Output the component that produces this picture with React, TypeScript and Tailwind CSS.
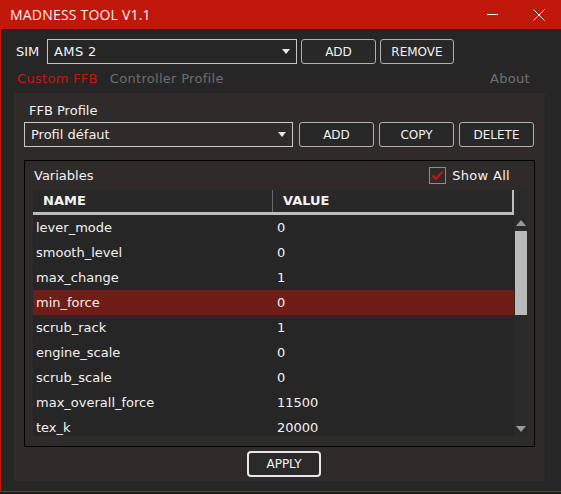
import React from 'react'

const rows = [
  ['lever_mode', '0'],
  ['smooth_level', '0'],
  ['max_change', '1'],
  ['min_force', '0'],
  ['scrub_rack', '1'],
  ['engine_scale', '0'],
  ['scrub_scale', '0'],
  ['max_overall_force', '11500'],
  ['tex_k', '20000'],
]

const font = { fontFamily: '"DejaVu Sans", sans-serif' }

function Arrow() {
  return (
    <svg width="8" height="5" viewBox="0 0 8 5" className="shrink-0">
      <path d="M0 0 H8 L4 5 Z" fill="#e8e8e8" />
    </svg>
  )
}

function Btn({ label, w }: { label: string; w: string }) {
  return (
    <button
      className={`${w} h-[25px] rounded-[3px] border border-[#b0b0b0] bg-[#282828] text-[12px] text-[#f2f2f2] flex items-center justify-center`}
    >
      {label}
    </button>
  )
}

export default function App() {
  return (
    <div className="w-[561px] h-[494px] bg-[#1e1e1e] overflow-hidden" style={font}>
      <div className="h-[492px] border-l border-b border-[#c1180c] bg-[#262626] flex flex-col">
        {/* Title bar */}
        <div className="h-[29px] bg-[#c1180c] flex items-center pl-[9px] shrink-0">
          <span
            className="text-[14px] text-[#fbeeee] tracking-[0.2px]"
            style={{ fontFamily: '"Open Sans", sans-serif' }}
          >
            MADNESS TOOL V1.1
          </span>
          <div className="ml-auto flex items-center">
            <div className="w-[11px] h-px bg-white mr-[35px]" />
            <svg width="12" height="12" viewBox="0 0 12 12" className="mr-[16px]">
              <path d="M0.5 0.5 L11.5 11.5 M11.5 0.5 L0.5 11.5" stroke="#fff" strokeWidth="1" />
            </svg>
          </div>
        </div>

        {/* SIM row */}
        <div className="mt-[10px] h-[25px] flex items-center pl-[15px]">
          <span className="text-[13px] text-[#f2f2f2] w-[31px]">SIM</span>
          <div className="w-[250px] h-[25px] border border-[#c8c8c8] flex items-center pl-[6px] pr-[6px]">
            <span className="text-[13px] text-[#f2f2f2] tracking-[0.4px]">AMS 2</span>
            <div className="ml-auto">
              <Arrow />
            </div>
          </div>
          <div className="ml-[4px] flex gap-[4px]">
            <Btn label="ADD" w="w-[75px]" />
            <Btn label="REMOVE" w="w-[74px]" />
          </div>
        </div>

        {/* Tabs */}
        <div className="h-[29px] flex items-center pl-[16px] pr-[31px] text-[13px] tracking-[0.3px]">
          <span className="text-[#c4170c]">Custom FFB</span>
          <span className="ml-[12px] text-[#6e6e6e]">Controller Profile</span>
          <span className="ml-auto text-[#727272]">About</span>
        </div>

        {/* Panel */}
        <div className="ml-[13px] w-[531px] h-[388px] bg-[#2f2b2a] px-[10px] pt-[10px] pb-[4px] flex flex-col">
          <div className="h-[16px] pl-[5px] text-[13px] text-[#f2f2f2] leading-[16px]">FFB Profile</div>
          <div className="mt-[3px] h-[25px] flex items-center">
            <div className="w-[269px] h-[25px] border border-[#c8c8c8] flex items-center pl-[6px] pr-[6px]">
              <span className="text-[13px] text-[#f2f2f2]">Profil défaut</span>
              <div className="ml-auto">
                <Arrow />
              </div>
            </div>
            <div className="ml-[6px] flex gap-[5px]">
              <Btn label="ADD" w="w-[75px]" />
              <Btn label="COPY" w="w-[75px]" />
              <Btn label="DELETE" w="w-[75px]" />
            </div>
          </div>

          {/* Variables group */}
          <div className="mt-[13px] h-[287px] border border-black pl-[8px] flex flex-col">
            <div className="h-[29px] flex items-center pl-[1px] pr-[24px]">
              <span className="text-[13px] text-[#f2f2f2]">Variables</span>
              <div className="ml-auto flex items-center">
                <div className="w-[17px] h-[17px] border border-[#8c8c8c] flex items-center justify-center">
                  <svg width="13" height="11" viewBox="0 0 13 11">
                    <path d="M1.5 5.5 L5 9 L11.5 1.5" stroke="#c4170c" strokeWidth="2.2" fill="none" />
                  </svg>
                </div>
                <span className="ml-[6px] text-[13px] text-[#f2f2f2] tracking-[0.3px]">Show All</span>
              </div>
            </div>

            {/* Table */}
            <div className="w-[494px] h-[246px] bg-[#262626] flex overflow-hidden">
              <div className="w-[481px] flex flex-col">
                <div className="h-[25px] shrink-0 bg-[#282828] border-b-[3px] border-r-2 border-[#bdbdbd] flex items-center text-[13px] font-bold text-[#f4f4f4]">
                  <div className="w-[240px] h-full pl-[10px] flex items-center border-r border-[#6a6a6a]">NAME</div>
                  <div className="pl-[10px]">VALUE</div>
                </div>
                {rows.map(([name, value]) => (
                  <div
                    key={name}
                    className={`h-[25px] shrink-0 flex items-center text-[13px] text-[#f2f2f2] ${
                      name === 'min_force' ? 'bg-[#701d17]' : ''
                    }`}
                  >
                    <div className="w-[244px] pl-[3px]">{name}</div>
                    <div>{value}</div>
                  </div>
                ))}
              </div>
              {/* Scrollbar */}
              <div className="w-[13px] flex flex-col bg-[#2a2a2a]">
                <div className="h-[25px] shrink-0" />
                <div className="h-[15px] shrink-0 flex items-center justify-center pl-[1px]">
                  <svg width="10" height="6" viewBox="0 0 10 6">
                    <path d="M0 6 H10 L5 0 Z" fill="#9a9a9a" />
                  </svg>
                </div>
                <div className="mt-[1px] ml-[1px] h-[84px] bg-[#bababa] shrink-0" />
                <div className="flex-1" />
                <div className="h-[15px] shrink-0 flex items-center justify-center pl-[1px]">
                  <svg width="10" height="6" viewBox="0 0 10 6">
                    <path d="M0 0 H10 L5 6 Z" fill="#9a9a9a" />
                  </svg>
                </div>
              </div>
            </div>
          </div>

          <div className="mt-[4px] pl-[223px]">
            <button className="w-[74px] h-[26px] rounded-[4px] border-2 border-[#e6e6e6] bg-[#2a2a2a] text-[12px] text-[#f2f2f2] flex items-center justify-center">
              APPLY
            </button>
          </div>
        </div>
      </div>
    </div>
  )
}
